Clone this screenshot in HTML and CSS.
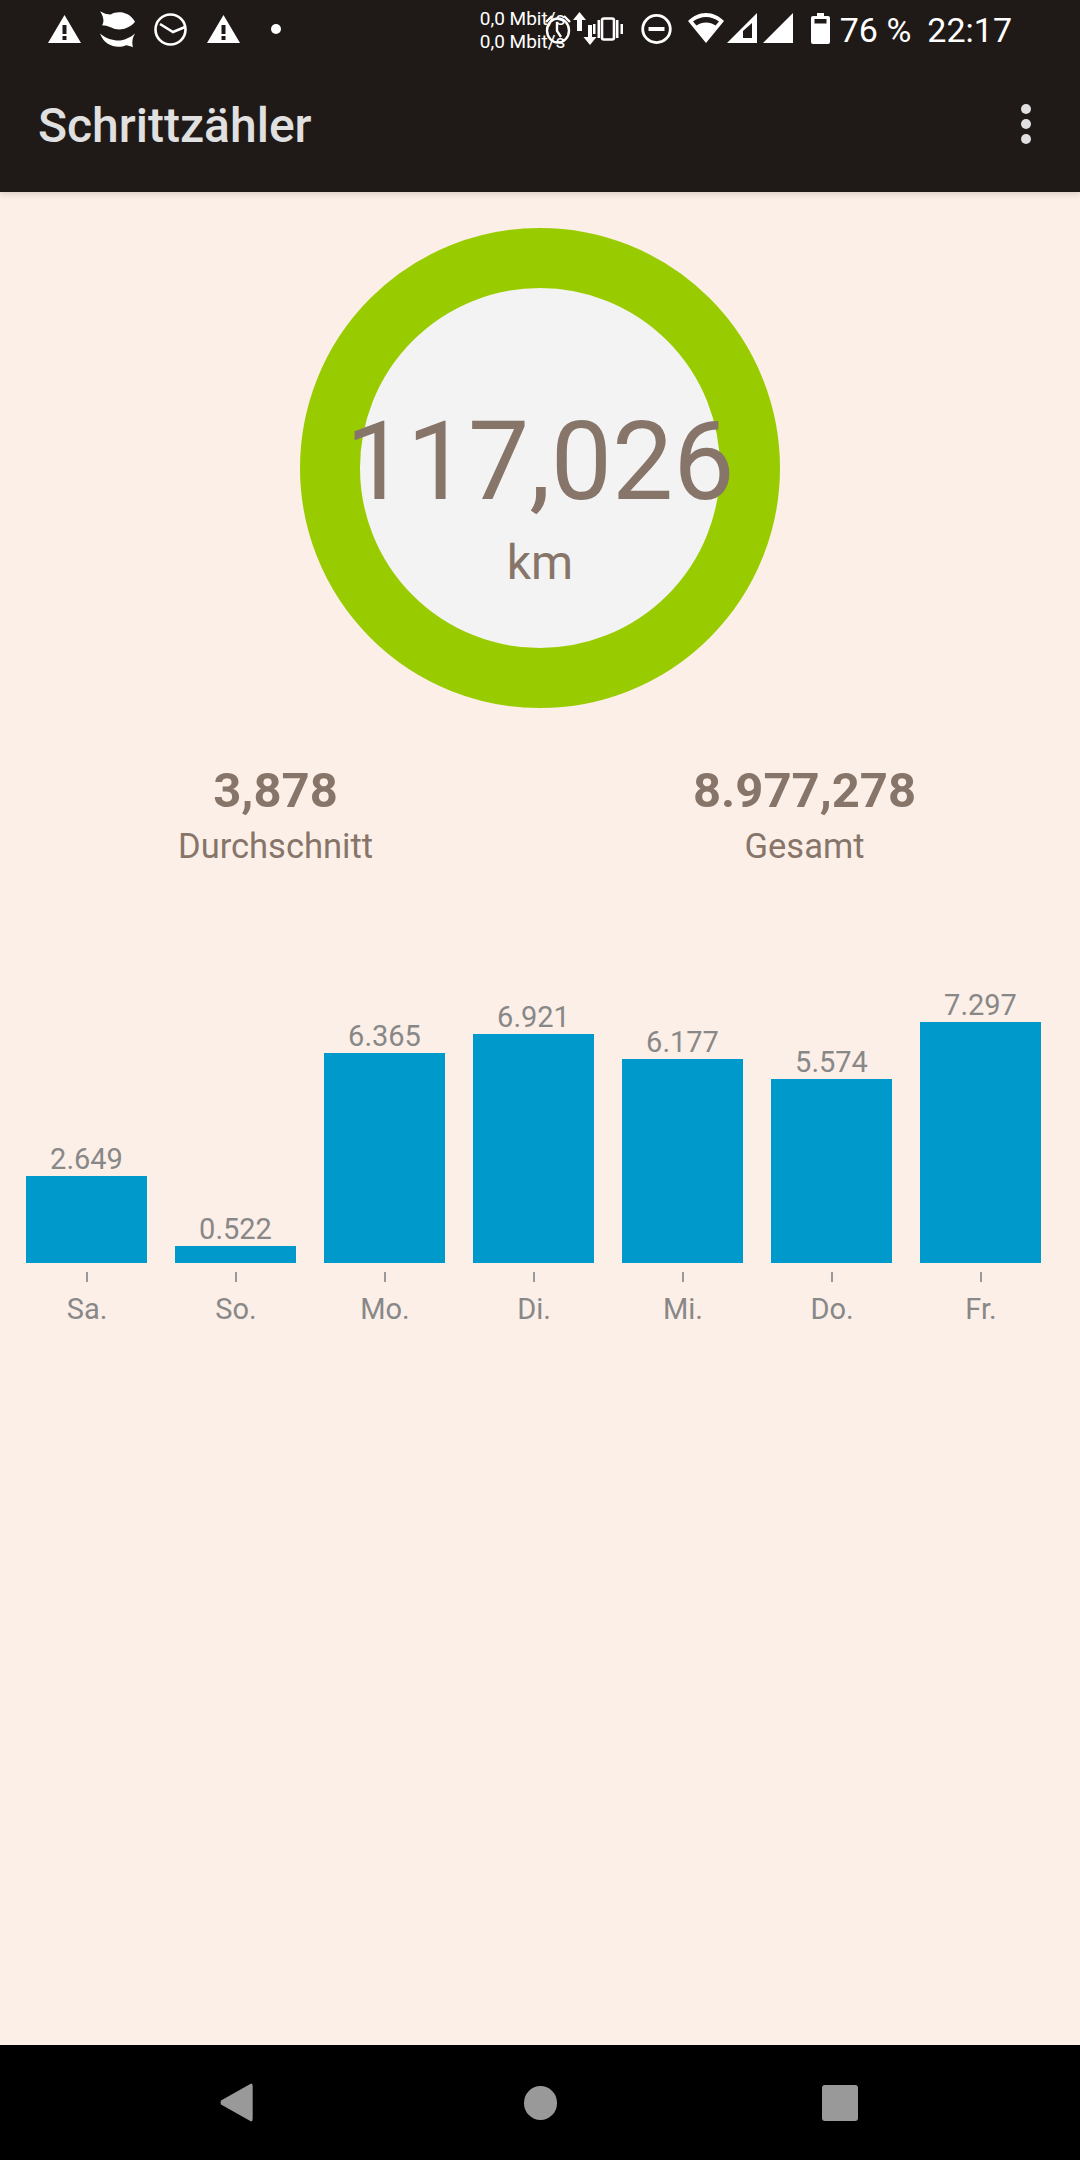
FILE: index.html
```html
<!DOCTYPE html>
<html lang="en">

<head>
    <meta charset="UTF-8">
    <title>Schrittzähler</title>
    <link rel="stylesheet" href="styles.css">
</head>

<body>
    <div class="screen">
        <header class="top-bar">
            <div class="status-bar">
                <div class="status-left">
                    <svg class="icon icon-warn" viewBox="0 0 33 28"><path fill-rule="evenodd" d="M16.5 0L33 28H0zM14.5 10v9h4v-9zM14.5 21v4h4v-4z"/></svg>
                    <svg class="icon icon-fish" viewBox="0 0 105 110"><path d="M0 0C10 6 22 10 32 10C50 0 85 -2 105 32C85 58 50 58 36 50C25 44 12 42 6 42C14 30 10 15 0 0z"/><path d="M0 67C18 82 38 88 55 88C72 88 90 80 105 67C97 80 95 95 99 108C92 104 84 103 78 102C55 112 15 108 0 67z"/></svg>
                    <svg class="icon icon-clock" viewBox="0 0 35 33"><circle cx="17.5" cy="16.5" r="15" fill="none" stroke="#fff" stroke-width="2.6"/><path d="M7 11L20 19L32 14" fill="none" stroke="#fff" stroke-width="2.6"/></svg>
                    <svg class="icon icon-warn" viewBox="0 0 33 28"><path fill-rule="evenodd" d="M16.5 0L33 28H0zM14.5 10v9h4v-9zM14.5 21v4h4v-4z"/></svg>
                    <span class="dot"></span>
                </div>
                <div class="status-right">
                    <div class="net-speed">0,0 Mbit/s<br>0,0 Mbit/s</div>
                    <svg class="icon icon-alarm" viewBox="0 0 28 30"><ellipse cx="14" cy="16.5" rx="11" ry="12" fill="none" stroke="#fff" stroke-width="2.4"/><path d="M13 8v9l4 6M2 8l6-6M26 8l-6-6" fill="none" stroke="#fff" stroke-width="2.4"/></svg>
                    <svg class="icon icon-arrows" viewBox="0 0 24 34"><path d="M6.500 0L13 8H9V19H4V8H0zM17 33L10.500 25H15V13h4V25h4.500z"/></svg>
                    <svg class="icon icon-vibrate" viewBox="0 0 32 24"><path d="M1 7h2.500v10H1zM5.500 3h2.500v18H5.500zM24 3h2.500v18H24zM28.500 7h2.500v10h-2.500z"/><rect x="10" y="1.500" width="12" height="21" rx="2" fill="none" stroke="#fff" stroke-width="2.600"/></svg>
                    <svg class="icon icon-dnd" viewBox="0 0 31 30"><ellipse cx="15.5" cy="15" rx="13.800" ry="13.600" fill="none" stroke="#fff" stroke-width="2.800"/><path d="M7.500 13h16v4h-16z"/></svg>
                    <svg class="icon icon-wifi" viewBox="0 0 36 30"><path fill-rule="evenodd" d="M18 0C25 0 31 3 36 8L18 30L0 8C5 3 11 0 18 0zM5 8.500C13 2.500 23 2.500 31 8.500L27.500 12.500C22 8.500 14 8.500 8.500 12.500z"/></svg>
                    <svg class="icon icon-signal" viewBox="0 0 30 30"><path fill-rule="evenodd" d="M30 0V30H0zM16 18L25 10V25H16z"/></svg>
                    <svg class="icon icon-signal-full" viewBox="0 0 30 30"><path d="M30 0V30H0z"/></svg>
                    <svg class="icon icon-battery" viewBox="0 0 19 31"><path fill-rule="evenodd" d="M6 0h7v3h4a2 2 0 0 1 2 2v24a2 2 0 0 1-2 2H2a2 2 0 0 1-2-2V5a2 2 0 0 1 2-2h4zM3.500 6v4.500h12V6z"/></svg>
                    <span class="battery-text">76 %</span>
                    <span class="clock-text">22:17</span>
                </div>
            </div>
            <div class="toolbar">
                <h1 class="app-title">Schrittzähler</h1>
                <div class="overflow-menu"><span></span><span></span><span></span></div>
            </div>
        </header>

        <main class="content">
            <div class="ring">
                <div class="ring-value">117,026</div>
                <div class="ring-unit">km</div>
            </div>

            <div class="stats">
                <div class="stat">
                    <div class="stat-value">3,878</div>
                    <div class="stat-label">Durchschnitt</div>
                </div>
                <div class="stat">
                    <div class="stat-value">8.977,278</div>
                    <div class="stat-label">Gesamt</div>
                </div>
            </div>

            <div class="chart">
                <div class="chart-col">
                    <div class="bar-value">2.649</div>
                    <div class="bar" style="height: 87px"></div>
                    <div class="tick"></div>
                    <div class="bar-label">Sa.</div>
                </div>
                <div class="chart-col">
                    <div class="bar-value">0.522</div>
                    <div class="bar" style="height: 17px"></div>
                    <div class="tick"></div>
                    <div class="bar-label">So.</div>
                </div>
                <div class="chart-col">
                    <div class="bar-value">6.365</div>
                    <div class="bar" style="height: 210px"></div>
                    <div class="tick"></div>
                    <div class="bar-label">Mo.</div>
                </div>
                <div class="chart-col">
                    <div class="bar-value">6.921</div>
                    <div class="bar" style="height: 229px"></div>
                    <div class="tick"></div>
                    <div class="bar-label">Di.</div>
                </div>
                <div class="chart-col">
                    <div class="bar-value">6.177</div>
                    <div class="bar" style="height: 204px"></div>
                    <div class="tick"></div>
                    <div class="bar-label">Mi.</div>
                </div>
                <div class="chart-col">
                    <div class="bar-value">5.574</div>
                    <div class="bar" style="height: 184px"></div>
                    <div class="tick"></div>
                    <div class="bar-label">Do.</div>
                </div>
                <div class="chart-col">
                    <div class="bar-value">7.297</div>
                    <div class="bar" style="height: 241px"></div>
                    <div class="tick"></div>
                    <div class="bar-label">Fr.</div>
                </div>
            </div>
        </main>

        <footer class="nav-bar">
            <svg class="nav-back" viewBox="0 0 33 39"><path d="M31 0.500Q33 0 33 3V36Q33 39 31 38.500L1 21.500Q0 19.500 1 17.500z"/></svg>
            <span class="nav-home"></span>
            <span class="nav-recent"></span>
        </footer>
    </div>
</body>

</html>
```

FILE: styles.css
```css
* {
    box-sizing: border-box;
}

html,
body {
    margin: 0;
    padding: 0;
}

body {
    font-family: Roboto, "Liberation Sans", sans-serif;
}

.screen {
    display: flex;
    flex-direction: column;
    width: 1080px;
    height: 2160px;
    overflow: hidden;
    background-color: #fcefe7;
}

/* status bar and toolbar */

.top-bar {
    flex: none;
    height: 192px;
    background-color: #1f1a17;
    box-shadow: 0 2px 6px rgba(0, 0, 0, 0.15);
    position: relative;
    z-index: 1;
}

.status-bar {
    display: flex;
    justify-content: space-between;
    height: 56px;
    padding: 0 68px 0 48px;
    color: #fff;
}

.status-left,
.status-right {
    display: flex;
    align-items: flex-start;
}

.icon {
    display: block;
    flex: none;
    fill: #fff;
}

.icon-warn {
    width: 33px;
    height: 28px;
    margin-top: 15px;
}

.icon-fish {
    width: 35px;
    height: 37px;
    margin: 11px 0 0 19px;
}

.icon-clock {
    width: 35px;
    height: 33px;
    margin: 13px 19px 0 18px;
}

.dot {
    width: 10px;
    height: 10px;
    margin: 24px 0 0 31px;
    border-radius: 50%;
    background-color: #fff;
}

.net-speed {
    width: 87px;
    margin: 7px 0 0 -2px;
    font-size: 19px;
    line-height: 23px;
    white-space: nowrap;
}

.icon-alarm {
    width: 28px;
    height: 30px;
    margin: 14px 0 0 -23px;
}

.icon-arrows {
    width: 24px;
    height: 34px;
    margin: 12px 0 0 1px;
}

.icon-vibrate {
    width: 32px;
    height: 24px;
    margin: 17px 0 0 -5px;
}

.icon-dnd {
    width: 31px;
    height: 30px;
    margin: 14px 0 0 17px;
}

.icon-wifi {
    width: 36px;
    height: 30px;
    margin: 13px 0 0 16px;
}

.icon-signal {
    width: 30px;
    height: 30px;
    margin: 13px 0 0 3px;
}

.icon-signal-full {
    width: 30px;
    height: 30px;
    margin: 13px 0 0 6px;
}

.icon-battery {
    width: 19px;
    height: 31px;
    margin: 13px 0 0 18px;
}

.battery-text,
.clock-text {
    margin-top: 2px;
    font-size: 34px;
    line-height: 56px;
    white-space: nowrap;
}

.battery-text {
    margin-left: 10px;
}

.clock-text {
    margin-left: 16px;
}

.toolbar {
    display: flex;
    align-items: center;
    justify-content: space-between;
    height: 136px;
    padding: 0 49px 0 38px;
}

.app-title {
    margin: 2px 0 0;
    color: #e0e0e0;
    font-size: 48px;
    font-weight: 500;
}

.overflow-menu {
    display: flex;
    flex-direction: column;
    gap: 5px;
}

.overflow-menu span {
    width: 10px;
    height: 10px;
    border-radius: 50%;
    background-color: #e0e0e0;
}

/* ring */

.content {
    flex: 1;
    display: flex;
    flex-direction: column;
    align-items: center;
    padding-top: 36px;
    color: #87756a;
}

.ring {
    display: flex;
    flex-direction: column;
    align-items: center;
    width: 480px;
    height: 480px;
    padding-top: 111px;
    border: 60px solid #99cc00;
    border-radius: 50%;
    background-color: #f3f3f3;
}

.ring-value {
    font-size: 109px;
    line-height: 127px;
    white-space: nowrap;
}

.ring-unit {
    margin-top: 9px;
    font-size: 48px;
    line-height: 56px;
}

/* stats */

.stats {
    display: grid;
    grid-template-columns: 529px 529px;
    justify-content: center;
    width: 100%;
    margin-top: 54px;
}

.stat {
    text-align: center;
}

.stat-value {
    font-size: 49px;
    font-weight: 700;
    line-height: 57px;
}

.stat-label {
    margin-top: 7px;
    font-size: 34.5px;
    line-height: 40px;
}

/* bar chart */

.chart {
    display: flex;
    align-items: flex-end;
    gap: 28px;
    width: 100%;
    height: 360px;
    margin-top: 100px;
    padding-left: 26px;
}

.chart-col {
    display: flex;
    flex-direction: column;
    align-items: center;
    width: 121px;
    color: #888;
}

.bar-value {
    font-size: 29px;
    line-height: 33px;
}

.bar {
    width: 100%;
    background-color: #0099cc;
}

.tick {
    width: 2px;
    height: 10px;
    margin-top: 9px;
    background-color: #999;
}

.bar-label {
    margin-top: 11px;
    padding-left: 1px;
    font-size: 29px;
    line-height: 33px;
}

/* navigation bar */

.nav-bar {
    flex: none;
    display: flex;
    align-items: center;
    height: 115px;
    padding: 0 222px 0 220px;
    background-color: #000;
}

.nav-back {
    width: 33px;
    height: 39px;
    fill: #999;
}

.nav-home {
    width: 34px;
    height: 34px;
    margin-left: 271px;
    border-radius: 50%;
    background-color: #999;
}

.nav-recent {
    width: 36px;
    height: 36px;
    margin-left: 265px;
    border-radius: 3px;
    background-color: #999;
}
```
